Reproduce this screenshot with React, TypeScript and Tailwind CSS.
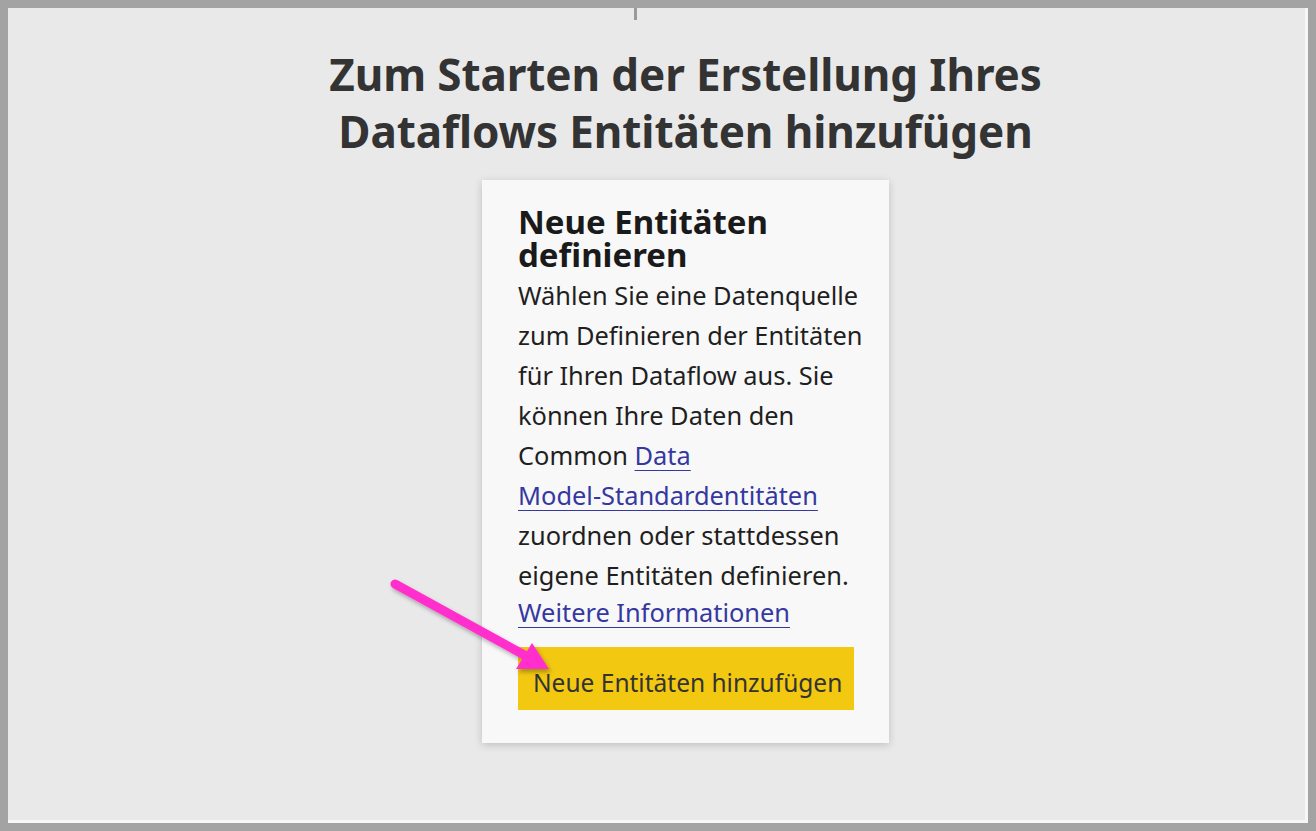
export default function App() {
  return (
    <div className="w-[1316px] h-[831px] bg-[#a3a3a3] p-2 font-['Noto_Sans',sans-serif]">
      <div className="relative h-full bg-[#e9e9e9] border-r-[3px] border-b-[3px] border-[#f6f6f6] flex flex-col items-center pl-[58px]">
        <div className="absolute left-[626px] top-0 w-[3px] h-[12px] bg-[#9a9a9a]" />
        <h1 className="mt-[38px] text-center text-[44px] leading-[57px] font-bold text-[#333333] tracking-[-0.1px]">
          Zum Starten der Erstellung Ihres
          <br />
          Dataflows Entitäten hinzufügen
        </h1>
        <div className="mt-[20px] w-[407px] bg-[#f8f8f8] shadow-[0_2px_8px_rgba(0,0,0,0.18)] pl-[36px] pr-[12px] pt-[25px] pb-[33px]">
          <h2 className="text-[33px] leading-[33px] font-bold text-[#1a1a1a]">
            Neue Entitäten
            <br />
            definieren
          </h2>
          <p className="mt-[4px] text-[25.4px] leading-[40px] text-[#1f1f1f] whitespace-nowrap">
            Wählen Sie eine Datenquelle
            <br />
            zum Definieren der Entitäten
            <br />
            für Ihren Dataflow aus. Sie
            <br />
            können Ihre Daten den
            <br />
            Common <a className="text-[#3538a0] underline underline-offset-[5px] decoration-1">Data</a>
            <br />
            <a className="text-[#3538a0] underline underline-offset-[5px] decoration-1">Model-Standardentitäten</a>
            <br />
            zuordnen oder stattdessen
            <br />
            eigene Entitäten definieren.
          </p>
          <a className="block -mt-[3px] text-[25.4px] leading-[40px] text-[#3538a0] underline underline-offset-[5px] decoration-1">
            Weitere Informationen
          </a>
          <button className="mt-[15px] w-[336px] h-[63px] bg-[#f2c811] text-[#333333] text-[24.5px] text-left pl-[15px] pt-[10px]">
            Neue Entitäten hinzufügen
          </button>
        </div>
        <svg className="absolute left-0 top-0" width="1300" height="814" viewBox="0 0 1300 814">
          <defs>
            <filter id="sh" x="-20%" y="-20%" width="140%" height="140%">
              <feDropShadow dx="2" dy="3" stdDeviation="2" floodColor="#000" floodOpacity="0.3" />
            </filter>
          </defs>
          <g filter="url(#sh)" transform="translate(-8,-8)">
            <line x1="395" y1="584" x2="526" y2="656" stroke="#ff2fcc" strokeWidth="9" strokeLinecap="round" />
            <polygon points="549,669 516,669 532,643" fill="#ff2fcc" />
          </g>
        </svg>
      </div>
    </div>
  );
}
